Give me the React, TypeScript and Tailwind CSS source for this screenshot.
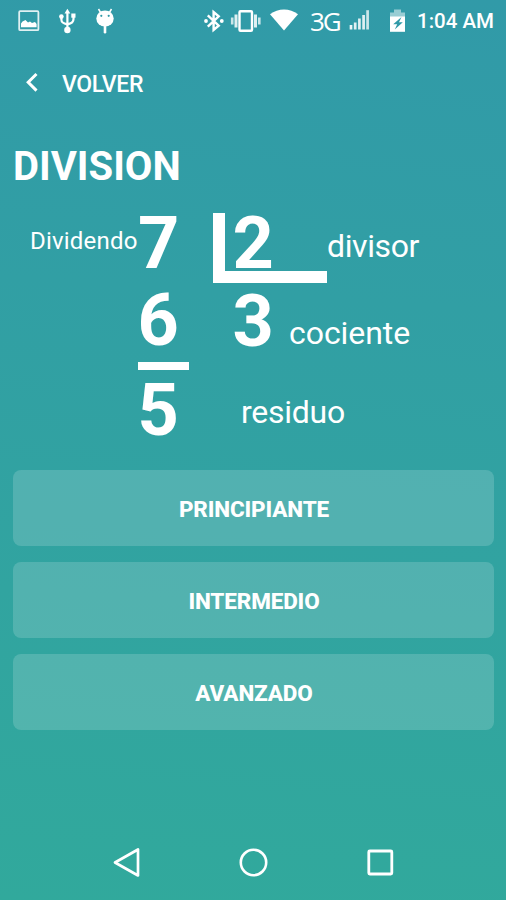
import React from "react";

const levels = ["PRINCIPIANTE", "INTERMEDIO", "AVANZADO"];

function StatusBar() {
  return (
    <header className="flex h-[42px] items-center text-white">
      <svg className="ml-[18px] h-[22px] w-[22px]" viewBox="0 0 22 22" fill="none">
        <rect x="1.2" y="1.2" width="19.2" height="19" rx="1" stroke="currentColor" strokeWidth="1.8" opacity="0.85" />
        <path d="M3 17.300v-3.800l1.500-2 3-1.500 2.500 2.500 2-1 2 1.500 3-1 1.600 2v3.300z" fill="currentColor" />
      </svg>
      <svg className="ml-[18px] h-[26px] w-[20px]" viewBox="0 0 20 26" fill="none" stroke="currentColor" strokeWidth="2.200">
        <path d="M9.400 4v18M3.400 9v2.500c0 3 1.600 4 6 4.800M15.500 8v3c0 3-1.800 4.500-6 5.300" />
        <path d="M6.500 5.500 9.400 .8 12.300 5.500z" fill="currentColor" stroke="none" />
        <circle cx="3.400" cy="8.600" r="2.300" fill="currentColor" stroke="none" />
        <rect x="13.300" y="5.500" width="4.200" height="4.200" fill="currentColor" stroke="none" />
        <circle cx="9.400" cy="22" r="3.200" fill="currentColor" stroke="none" />
      </svg>
      <svg className="ml-[17px] h-[28px] w-[20px]" viewBox="0 0 20 28" fill="none">
        <path d="m3.500 2 3 5M16.500 2l-3 5" stroke="currentColor" strokeWidth="1.500" />
        <ellipse cx="10" cy="11.500" rx="8.700" ry="8" fill="currentColor" />
        <path d="M10 18v7.300" stroke="currentColor" strokeWidth="2.600" strokeLinecap="round" />
        <circle cx="6.300" cy="8.800" r="1.100" fill="#319aa8" />
        <circle cx="13.700" cy="8.800" r="1.100" fill="#319aa8" />
      </svg>
      <svg className="ml-[88px] h-[24px] w-[22px]" viewBox="0 0 22 24" fill="none">
        <path d="m4.800 6.300 10.900 10.400-5.100 4.300V3l5.100 4.300-10.900 10.400" stroke="currentColor" strokeWidth="2.400" />
        <circle cx="3" cy="12" r="1.900" fill="currentColor" />
        <circle cx="18.800" cy="12" r="1.900" fill="currentColor" />
      </svg>
      <svg className="ml-[5px] h-[24px] w-[32px]" viewBox="0 0 32 24" fill="none" stroke="currentColor">
        <rect x="9.500" y="2.200" width="12.500" height="19.600" rx="1" strokeWidth="2.400" />
        <path d="M6 5.500v13M25.500 5.500v13" strokeWidth="3" opacity="0.85" />
        <path d="M2.200 8.500v7M29.300 8.500v7" strokeWidth="2.600" opacity="0.75" />
      </svg>
      <svg className="ml-[8px] h-[24px] w-[28px]" viewBox="0 0 28 24" fill="currentColor">
        <path d="M0 5.300C8-1.100 20-1.100 28 5.300L14 21.500z" />
      </svg>
      <span className="ml-[12px] w-[33px] whitespace-nowrap pb-px font-['Open_Sans',sans-serif] text-[26px] font-medium leading-[40px] tracking-[-2px]">3G</span>
      <svg className="ml-[6px] h-[24px] w-[21px]" viewBox="0 0 21 24" stroke="currentColor" strokeWidth="2.700" fill="none">
        <path d="M2 16v4.500" opacity="0.9" />
        <path d="M6.200 13.500v7" opacity="0.85" />
        <path d="M10.400 9.500v11" opacity="0.85" />
        <path d="M14.600 6v14.500" opacity="0.85" />
        <path d="M18.600 1.200v19.300" opacity="0.75" />
      </svg>
      <svg className="ml-[19px] h-[26px] w-[17px]" viewBox="0 0 17 26" fill="currentColor">
        <path d="M1 10V4.500h4V1.500h7v3h4V10z" opacity="0.5" />
        <path d="M1 8.500h15v15.300H1z" />
        <path d="m12.500 9-8.300 7.300h4L5.800 21.500l8-7.200H10z" fill="#319aa8" />
      </svg>
      <span className="ml-[11px] whitespace-nowrap text-[20.500px] font-medium leading-[42px]">1:04 AM</span>
    </header>
  );
}

function DivisionDiagram() {
  return (
    <section className="mt-[26px] h-[257px] text-white">
      <div className="flex h-[70px] items-start pl-[30px]">
        <span className="mt-4 w-[108px] whitespace-nowrap text-[24px] leading-6 tracking-[0.200px]">Dividendo</span>
        <span className="w-[75px] text-[72px] font-bold leading-[62px]">7</span>
        <div className="h-[70px] w-[114px] border-b-[12px] border-l-[12px] border-white pl-[7.500px]">
          <span className="block text-[72px] font-bold leading-[62px]">2</span>
        </div>
        <span className="mt-[17px] whitespace-nowrap text-[32px] leading-8 tracking-[-0.400px]">divisor</span>
      </div>
      <div className="flex h-[79px] items-start pl-[137.500px]">
        <span className="mt-[2px] w-[95px] text-[72px] font-bold leading-[72px]">6</span>
        <span className="mt-[3px] w-[56.500px] text-[72px] font-bold leading-[72px]">3</span>
        <span className="mt-[34px] whitespace-nowrap text-[32px] leading-8 tracking-[-0.050px]">cociente</span>
      </div>
      <div className="ml-[138px] h-2 w-[50.500px] bg-white" />
      <div className="flex items-start pl-[137.500px]">
        <span className="mt-[5px] w-[103.500px] text-[72px] font-bold leading-[72px]">5</span>
        <span className="mt-[26px] whitespace-nowrap text-[32px] leading-8 tracking-[-0.250px]">residuo</span>
      </div>
    </section>
  );
}

function NavigationBar() {
  return (
    <nav className="mt-auto flex h-[75px] items-center justify-center gap-[95px] text-white">
      <svg className="h-8 w-8" viewBox="0 0 32 32" fill="none" stroke="currentColor" strokeWidth="2.700" strokeLinejoin="round">
        <path d="M5 15.500 28 2.500v26z" />
      </svg>
      <svg className="h-8 w-8" viewBox="0 0 32 32" fill="none" stroke="currentColor" strokeWidth="2.600">
        <circle cx="16.500" cy="15.500" r="12.700" />
      </svg>
      <svg className="h-8 w-8" viewBox="0 0 32 32" fill="none" stroke="currentColor" strokeWidth="2.800">
        <rect x="4.800" y="4" width="23" height="23" rx="1" />
      </svg>
    </nav>
  );
}

export default function App() {
  return (
    <div className="flex h-[900px] w-[506px] flex-col overflow-hidden bg-[linear-gradient(184deg,#319aa8,#31a99c)] font-[Roboto,sans-serif]">
      <StatusBar />
      <button className="mt-[30px] flex h-6 items-center text-white">
        <svg className="ml-[24px] h-6 w-4" viewBox="0 0 16 24" fill="none" stroke="currentColor" strokeWidth="3">
          <path d="m12.500 2-8.300 8.300 8.300 8.300" />
        </svg>
        <span className="ml-[22px] pt-px text-[23px] font-medium leading-6 tracking-[-0.350px]">VOLVER</span>
      </button>
      <h1 className="ml-[13px] mt-[51px] text-[40px] font-bold leading-[40px] text-white">DIVISION</h1>
      <DivisionDiagram />
      <div className="ml-[13px] flex w-[481px] flex-col gap-4">
        {levels.map((level) => (
          <button
            key={level}
            className="h-[76px] rounded-lg bg-white/16 pl-px pt-[3px] text-[22.500px] font-extrabold tracking-[-0.150px] text-white"
          >
            {level}
          </button>
        ))}
      </div>
      <NavigationBar />
    </div>
  );
}
